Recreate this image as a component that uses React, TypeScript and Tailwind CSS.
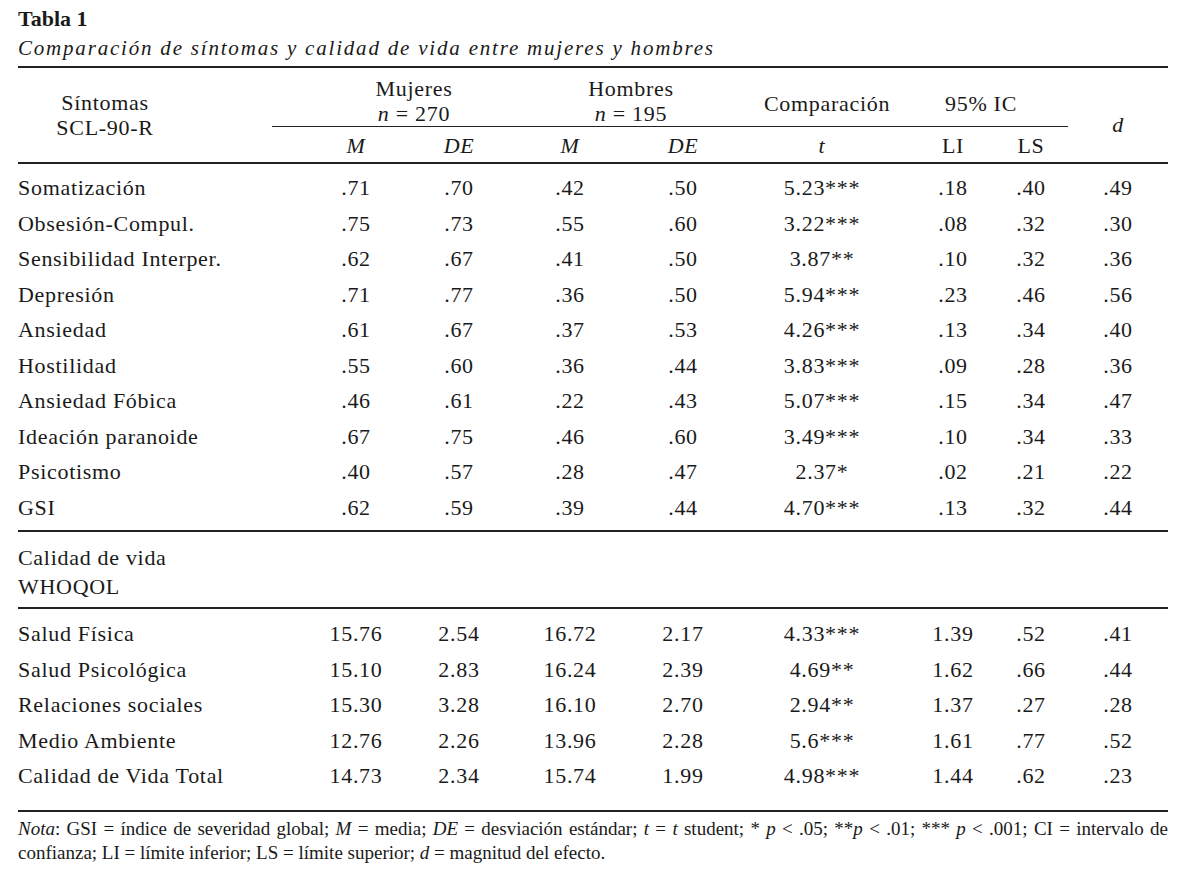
const cols = 'grid grid-cols-[254px_28px_112px_94px_128px_98px_180px_82px_74px_100px]';

type Row = { label: string; v: string[] };

const symptoms: Row[] = [
  { label: 'Somatización', v: ['.71', '.70', '.42', '.50', '5.23***', '.18', '.40', '.49'] },
  { label: 'Obsesión-Compul.', v: ['.75', '.73', '.55', '.60', '3.22***', '.08', '.32', '.30'] },
  { label: 'Sensibilidad Interper.', v: ['.62', '.67', '.41', '.50', '3.87**', '.10', '.32', '.36'] },
  { label: 'Depresión', v: ['.71', '.77', '.36', '.50', '5.94***', '.23', '.46', '.56'] },
  { label: 'Ansiedad', v: ['.61', '.67', '.37', '.53', '4.26***', '.13', '.34', '.40'] },
  { label: 'Hostilidad', v: ['.55', '.60', '.36', '.44', '3.83***', '.09', '.28', '.36'] },
  { label: 'Ansiedad Fóbica', v: ['.46', '.61', '.22', '.43', '5.07***', '.15', '.34', '.47'] },
  { label: 'Ideación paranoide', v: ['.67', '.75', '.46', '.60', '3.49***', '.10', '.34', '.33'] },
  { label: 'Psicotismo', v: ['.40', '.57', '.28', '.47', '2.37*', '.02', '.21', '.22'] },
  { label: 'GSI', v: ['.62', '.59', '.39', '.44', '4.70***', '.13', '.32', '.44'] },
];

const quality: Row[] = [
  { label: 'Salud Física', v: ['15.76', '2.54', '16.72', '2.17', '4.33***', '1.39', '.52', '.41'] },
  { label: 'Salud Psicológica', v: ['15.10', '2.83', '16.24', '2.39', '4.69**', '1.62', '.66', '.44'] },
  { label: 'Relaciones sociales', v: ['15.30', '3.28', '16.10', '2.70', '2.94**', '1.37', '.27', '.28'] },
  { label: 'Medio Ambiente', v: ['12.76', '2.26', '13.96', '2.28', '5.6***', '1.61', '.77', '.52'] },
  { label: 'Calidad de Vida Total', v: ['14.73', '2.34', '15.74', '1.99', '4.98***', '1.44', '.62', '.23'] },
];

function DataRow({ row }: { row: Row }) {
  return (
    <div className={`${cols} h-[35.5px] items-center`}>
      <div className="col-span-2">{row.label}</div>
      {row.v.map((val, i) => (
        <div key={i} className="text-center">{val}</div>
      ))}
    </div>
  );
}

const sub = 'h-[35px] flex items-center justify-center pt-[2px]';

export default function App() {
  return (
    <div className="min-h-screen bg-white text-[#1a1a1a] font-['Liberation_Serif',serif]">
      <div className="w-[1150px] ml-[18px]">
        {/* Title */}
        <div className="pt-[6px] text-[22px] leading-[26px] font-bold">Tabla 1</div>
        <div className="text-[21px] leading-[32px] italic tracking-[1.8px]">
          Comparación de síntomas y calidad de vida entre mujeres y hombres
        </div>

        <div className="mt-[2px] h-[2px] bg-[#222]" />

        {/* Header */}
        <div className={`${cols} text-[22px] tracking-[0.7px]`}>
          <div className="row-span-2 flex items-center">
            <div className="w-[174px] text-center leading-[25px]">
              Síntomas<br />SCL-90-R
            </div>
          </div>
          <div className="col-span-3 pl-[50px] text-center border-b border-[#222] pt-[8px] leading-[25px]">
            Mujeres<br /><span className="italic">n</span> = 270
          </div>
          <div className="col-span-2 pl-[24px] text-center border-b border-[#222] pt-[8px] leading-[25px]">
            Hombres<br /><span className="italic">n</span> = 195
          </div>
          <div className="pl-[10px] border-b border-[#222] flex items-end justify-center pb-[9px] leading-[26px]">
            Comparación
          </div>
          <div className="col-span-2 pr-[18px] border-b border-[#222] flex items-end justify-center pb-[9px] leading-[26px]">
            95% IC
          </div>
          <div className="row-span-2 flex items-center justify-center pt-[18px] italic">d</div>

          <div />
          <div className={`${sub} italic`}>M</div>
          <div className={`${sub} italic`}>DE</div>
          <div className={`${sub} italic`}>M</div>
          <div className={`${sub} italic`}>DE</div>
          <div className={`${sub} italic`}>t</div>
          <div className={sub}>LI</div>
          <div className={sub}>LS</div>
        </div>

        <div className="h-[2px] bg-[#222]" />

        {/* Symptoms */}
        <div className="pt-[6px] pb-[5px] text-[22px] tracking-[0.7px]">
          {symptoms.map((r) => (
            <DataRow key={r.label} row={r} />
          ))}
        </div>

        <div className="h-[2px] bg-[#222]" />

        <div className="pt-[11px] pb-[6px] text-[22px] leading-[29px] tracking-[0.7px]">
          Calidad de vida<br />WHOQOL
        </div>

        <div className="h-[2px] bg-[#222]" />

        {/* Quality of life */}
        <div className="pt-[7px] pb-[16px] text-[22px] tracking-[0.7px]">
          {quality.map((r) => (
            <DataRow key={r.label} row={r} />
          ))}
        </div>

        <div className="h-[2px] bg-[#222]" />

        {/* Note */}
        <div className="pt-[5px] text-[19px] leading-[24px]">
          <p className="text-justify [text-align-last:justify]">
            <span className="italic">Nota</span>: GSI = índice de severidad global; <span className="italic">M</span> = media;{' '}
            <span className="italic">DE</span> = desviación estándar; <span className="italic">t</span> ={' '}
            <span className="italic">t</span> student; * <span className="italic">p</span> &lt; .05; **<span className="italic">p</span> &lt; .01; ***{' '}
            <span className="italic">p</span> &lt; .001; CI = intervalo de
          </p>
          <p>
            confianza; LI = límite inferior; LS = límite superior; <span className="italic">d</span> = magnitud del efecto.
          </p>
        </div>
      </div>
    </div>
  );
}
